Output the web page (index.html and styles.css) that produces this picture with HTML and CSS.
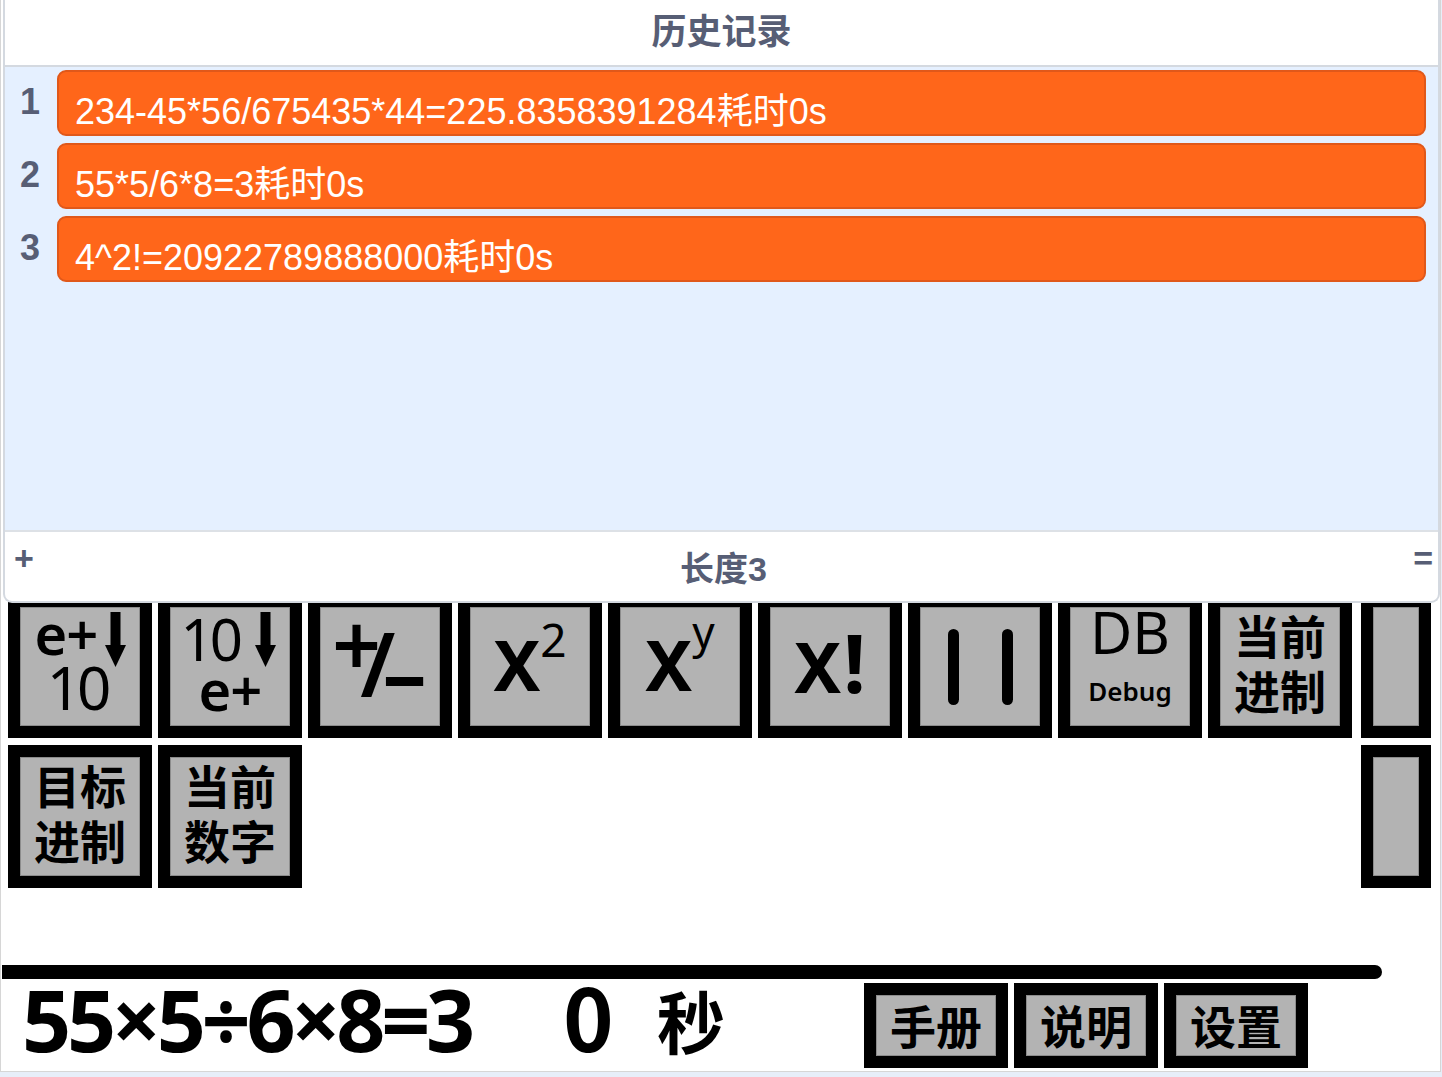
FILE: index.html
```html
<!DOCTYPE html>
<html lang="zh-CN">
<head>
<meta charset="utf-8">
<title>计算器</title>
<link rel="stylesheet" href="styles.css">
</head>
<body>
<div class="stage">
  <div class="pad">
    <div class="key stack r1 c1">
      <span class="st-top">e+</span>
      <svg class="arrow" viewBox="0 0 21 55" width="21" height="55"><rect x="5.5" y="0" width="10" height="37"/><polygon points="0,33 21,33 10.5,55"/></svg>
      <span class="st-bot">10</span>
    </div>
    <div class="key stack stack2 r1 c2">
      <span class="st-top">10</span>
      <svg class="arrow" viewBox="0 0 21 55" width="21" height="55"><rect x="5.5" y="0" width="10" height="37"/><polygon points="0,33 21,33 10.5,55"/></svg>
      <span class="st-bot">e+</span>
    </div>
    <div class="key pm r1 c3">
      <span class="pm-plus">+</span><span class="pm-slash">/</span><span class="pm-minus">−</span>
    </div>
    <div class="key xk r1 c4"><span class="xb">X<span class="sup2">2</span></span></div>
    <div class="key xk r1 c5"><span class="xb">X<span class="supy">y</span></span></div>
    <div class="key xk r1 c6"><span class="xb">X<span class="bang">!</span></span></div>
    <div class="key bars r1 c7"><span class="bar"></span><span class="bar"></span></div>
    <div class="key db r1 c8"><span class="db-big">DB</span><span class="db-small">Debug</span></div>
    <div class="key cjk r1 c9"><span>当前<br>进制</span></div>
    <div class="key side r1"></div>
    <div class="key cjk r2 c1"><span>目标<br>进制</span></div>
    <div class="key cjk r2 c2"><span>当前<br>数字</span></div>
    <div class="key side r2"></div>
  </div>

  <div class="rule"></div>

  <div class="bottom">
    <div class="expr">55×5÷6×8=3</div>
    <div class="secs">0</div>
    <div class="unit">秒</div>
    <div class="tools">
      <div class="tool">手册</div>
      <div class="tool">说明</div>
      <div class="tool">设置</div>
    </div>
  </div>

  <section class="monitor">
    <div class="mon-head">历史记录</div>
    <div class="mon-body">
      <div class="row"><div class="idx">1</div><div class="item">234-45*56/675435*44=225.8358391284耗时0s</div></div>
      <div class="row"><div class="idx">2</div><div class="item">55*5/6*8=3耗时0s</div></div>
      <div class="row"><div class="idx">3</div><div class="item">4^2!=20922789888000耗时0s</div></div>
    </div>
    <div class="mon-foot">
      <span class="add">+</span>
      <span class="len">长度3</span>
      <span class="eq">=</span>
    </div>
  </section>
</div>
</body>
</html>
```
FILE: styles.css
```css
* { box-sizing: border-box; }

body {
  margin: 0;
  background: #e7eef9;
  font-family: "Noto Sans", "Noto Sans CJK SC", sans-serif;
}

.stage {
  position: relative;
  width: 1441px;
  height: 1072px;
  border: 1px solid #d6d6d6;
  border-top: 0;
  background: #fff;
  overflow: hidden;
  display: flex;
  flex-direction: column;
}

/* keypad */
.pad {
  display: grid;
  grid-template-columns: repeat(9, 144px) 73px;
  grid-template-rows: 143px 143px;
  column-gap: 6px;
  row-gap: 7px;
  margin: 595px 0 0 7px;
}

.key {
  border: 12px solid #000;
  background: #b3b3b3;
  box-shadow: inset 0 0 0 1px #8c8c8c;
  display: grid;
  place-items: center;
  color: #000;
  line-height: 1;
}

.r1 { grid-row: 1; }
.r2 { grid-row: 2; }
.c1 { grid-column: 1; }
.c2 { grid-column: 2; }
.c3 { grid-column: 3; }
.c4 { grid-column: 4; }
.c5 { grid-column: 5; }
.c6 { grid-column: 6; }
.c7 { grid-column: 7; }
.c8 { grid-column: 8; }
.c9 { grid-column: 9; }

.key.side {
  grid-column: 10;
  width: 70px;
  justify-self: end;
}

/* stacked e+ / 10 keys */
.key.stack {
  grid-template-columns: 62px 21px;
  grid-template-rows: 55px auto;
  column-gap: 8px;
  place-items: start;
  align-content: start;
  justify-content: center;
  padding-top: 5px;
}
.st-top {
  grid-row: 1;
  grid-column: 1;
  align-self: end;
  font-size: 56px;
  font-weight: 600;
  line-height: 56px;
  margin-bottom: 6px;
  letter-spacing: -1px;
}
.stack2 .st-top {
  font-weight: 400;
  font-size: 58px;
  letter-spacing: -4px;
  margin: -1px 0 0 -4px;
  align-self: start;
}
.arrow {
  grid-row: 1;
  grid-column: 2;
  fill: #000;
}
.st-bot {
  grid-row: 2;
  grid-column: 1 / 3;
  justify-self: center;
  font-size: 60px;
  line-height: 60px;
  letter-spacing: -4px;
  margin-top: -10px;
  margin-right: 6px;
}
.stack2 .st-bot {
  font-size: 56px;
  font-weight: 600;
  letter-spacing: -1px;
  margin-top: -8px;
  margin-right: 0;
}

/* +/- key */
.pm {
  display: flex;
  align-items: flex-start;
  justify-content: flex-start;
  padding-left: 12px;
}
.pm-plus {
  font-size: 86px;
  font-weight: 600;
  line-height: 86px;
  margin-top: -6px;
}
.pm-slash {
  font-size: 88px;
  font-weight: 600;
  line-height: 88px;
  margin-left: -21px;
  margin-top: 12px;
}
.pm-minus {
  font-size: 76px;
  font-weight: 800;
  line-height: 76px;
  margin-left: -13px;
  margin-top: 34px;
}

/* X keys */
.xb {
  font-size: 70px;
  font-weight: 700;
  line-height: 70px;
  margin-top: -6px;
}
.sup2 {
  font-size: 46px;
  font-weight: 400;
  vertical-align: 34px;
  line-height: 0;
}
.supy {
  font-size: 44px;
  font-weight: 400;
  vertical-align: 43px;
  line-height: 0;
}
.bang {
  font-size: 80px;
  margin-left: 2px;
}

/* | | key */
.bars {
  display: flex;
  align-items: center;
  justify-content: center;
  gap: 43px;
}
.bar {
  width: 11px;
  height: 76px;
  border-radius: 6px;
  background: #000;
}

/* DB key */
.db {
  display: flex;
  flex-direction: column;
  align-items: center;
  justify-content: flex-start;
}
.db-big {
  font-size: 58px;
  line-height: 58px;
  margin-top: -4px;
}
.db-small {
  font-size: 26px;
  font-weight: 600;
  line-height: 26px;
  margin-top: 17px;
}

/* CJK keys */
.cjk span {
  font-family: "Noto Sans CJK SC", sans-serif;
  font-size: 46px;
  font-weight: 700;
  line-height: 55px;
  text-align: center;
  margin-bottom: 14px;
}

/* divider */
.rule {
  margin: 77px 0 0 1px;
  width: 1380px;
  height: 14px;
  background: #000;
  border-radius: 0 7px 7px 0;
}

/* bottom row */
.bottom {
  display: flex;
  align-items: flex-start;
  margin-top: 4px;
  height: 85px;
  font-family: "Noto Sans CJK SC", sans-serif;
  font-weight: 700;
  color: #000;
}
.expr {
  width: 541px;
  margin-left: 21px;
  font-family: "Noto Sans", sans-serif;
  font-size: 86px;
  letter-spacing: -4.3px;
  line-height: 85px;
  margin-top: -7px;
  white-space: nowrap;
}
.secs {
  width: 94px;
  font-size: 86px;
  line-height: 85px;
  margin-top: -11px;
}
.unit {
  width: 207px;
  font-size: 68px;
  line-height: 85px;
  margin-top: -6px;
}
.tools {
  display: flex;
  gap: 6px;
}
.tool {
  width: 144px;
  height: 85px;
  border: 12px solid #000;
  background: #b3b3b3;
  box-shadow: inset 0 0 0 1px #8c8c8c;
  display: grid;
  place-items: center;
  font-size: 46px;
  line-height: 46px;
  padding-bottom: 4px;
}

/* list monitor */
.monitor {
  position: absolute;
  top: 0;
  left: 2px;
  right: 0;
  height: 603px;
  border: 2px solid #d4d9e0;
  border-top: 0;
  border-radius: 0 0 9px 9px;
  background: #fff;
  display: flex;
  flex-direction: column;
  overflow: hidden;
  font-family: "Liberation Sans", "Noto Sans CJK SC", sans-serif;
}
.mon-head {
  height: 67px;
  border-bottom: 2px solid #d4d9e0;
  display: flex;
  align-items: center;
  justify-content: center;
  padding-bottom: 8px;
  font-family: "Noto Sans CJK SC", sans-serif;
  font-size: 35px;
  font-weight: 700;
  color: #575e75;
}
.mon-body {
  flex: 1;
  background: #e5f0ff;
  padding: 3px 12px 0 0;
  display: flex;
  flex-direction: column;
  gap: 7px;
}
.row {
  display: flex;
  height: 66px;
}
.idx {
  width: 50px;
  text-align: center;
  font-size: 36px;
  font-weight: 700;
  line-height: 64px;
  color: #575e75;
}
.item {
  flex: 1;
  margin-left: 2px;
  background: #ff661a;
  border: 2px solid #e0581a;
  border-radius: 9px;
  color: #fff;
  font-size: 36px;
  line-height: 36px;
  display: flex;
  align-items: flex-end;
  padding: 0 0 4px 16px;
  white-space: nowrap;
}
.mon-foot {
  height: 71px;
  border-top: 2px solid #dde1e6;
  display: flex;
  align-items: flex-start;
  padding: 0 5px 0 9px;
  color: #575e75;
  font-weight: 700;
}
.add, .eq {
  font-size: 34px;
  line-height: 52px;
}
.len {
  flex: 1;
  text-align: center;
  font-size: 34px;
  line-height: 74px;
}
```
